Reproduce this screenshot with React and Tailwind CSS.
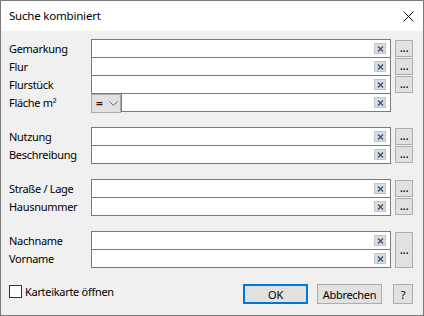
import React from 'react';

const groups = [
  { labels: ['Gemarkung', 'Flur', 'Flurstück', 'Fläche m²'], buttons: 3 },
  { labels: ['Nutzung', 'Beschreibung'], buttons: 2 },
  { labels: ['Straße / Lage', 'Hausnummer'], buttons: 2 },
  { labels: ['Nachname', 'Vorname'], buttons: 0, merged: true },
];

function ClearButton() {
  return (
    <span className="flex h-[11px] w-[12px] items-center justify-center border border-[#c4c4c4] bg-[#dcdcdc]">
      <svg width="7" height="6" viewBox="0 0 7 6">
        <path d="M1 0.5 L6 5.5 M6 0.5 L1 5.5" stroke="#2d4f86" strokeWidth="1.4" />
        <path d="M2.6 2.2 L4.4 3.8" stroke="#b86a2a" strokeWidth="0.8" />
      </svg>
    </span>
  );
}

function TextBox({ width }) {
  return (
    <div
      className={`flex h-full items-center justify-end border border-[#7a7a7a] bg-white pr-[4px] ${width}`}
    >
      <ClearButton />
    </div>
  );
}

function DotsButton({ tall }) {
  return (
    <button
      type="button"
      className={`flex w-[18px] items-center justify-center border border-[#adadad] bg-[#e1e1e1] pb-[1px] text-[12px] leading-none text-black ${
        tall ? 'h-[36px]' : 'h-[17px]'
      }`}
    >
      ...
    </button>
  );
}

function FieldRow({ label, first, children }) {
  return (
    <div className={`flex h-[19px] items-center ${first ? '' : 'mt-[-1px]'}`}>
      <span className="w-[82px] leading-none">{label}</span>
      {children}
    </div>
  );
}

function Group({ group, className }) {
  return (
    <div className={`flex ${className}`}>
      <div className="flex flex-col">
        {group.labels.map((label, index) => (
          <FieldRow key={label} label={label} first={index === 0}>
            {label === 'Fläche m²' ? (
              <div className="flex h-full">
                <div className="mt-[1px] flex h-[19px] w-[30px] items-center gap-[6px] border border-[#adadad] bg-[#e1e1e1] pl-[4px]">
                  <span className="text-[12px] font-bold leading-none text-[#3a0d0d]">=</span>
                  <svg width="9" height="5" viewBox="0 0 9 5">
                    <path d="M0.5 0.5 L4.5 4.5 L8.5 0.5" fill="none" stroke="#6b6b6b" strokeWidth="1" />
                  </svg>
                </div>
                <TextBox width="w-[270px]" />
              </div>
            ) : (
              <TextBox width="w-[300px]" />
            )}
          </FieldRow>
        ))}
      </div>
      <div className="ml-[4px] flex flex-col gap-[1px] pt-[1px]">
        {group.merged ? (
          <DotsButton tall />
        ) : (
          Array.from({ length: group.buttons }).map((_, i) => <DotsButton key={i} />)
        )}
      </div>
    </div>
  );
}

export default function App() {
  return (
    <div
      className="flex h-[316px] w-[424px] flex-col border border-[#7a7a7a] bg-[#f0f0f0] text-[11px] tracking-[-0.3px] text-black"
      style={{ fontFamily: '"Noto Sans", "Liberation Sans", sans-serif' }}
    >
      <div className="flex h-[30px] items-center justify-between bg-white pl-[8px] pr-[9px]">
        <span className="text-[11.5px] tracking-[-0.2px]">Suche kombiniert</span>
        <svg width="11" height="11" viewBox="0 0 11 11">
          <path d="M0.5 0.5 L10.5 10.5 M10.5 0.5 L0.5 10.5" stroke="#111" strokeWidth="1" />
        </svg>
      </div>

      <div className="flex flex-1 flex-col pl-[8px] pr-[10px] pt-[8px]">
        {groups.map((group, index) => (
          <Group key={index} group={group} className={index === 0 ? '' : 'mt-[15px]'} />
        ))}

        <div className="mt-[16px] flex items-start">
          <label className="mt-[1px] flex items-center gap-[3px]">
            <span className="h-[13px] w-[13px] border border-[#333] bg-white" />
            <span className="leading-none">Karteikarte öffnen</span>
          </label>
          <div className="ml-auto flex">
            <button
              type="button"
              className="h-[20px] w-[65px] border-2 border-[#0078d7] bg-[#e1e1e1] leading-none"
            >
              OK
            </button>
            <button
              type="button"
              className="ml-[9px] h-[20px] w-[65px] border border-[#adadad] bg-[#e1e1e1] leading-none"
            >
              Abbrechen
            </button>
            <button
              type="button"
              className="ml-[11px] h-[20px] w-[20px] border border-[#adadad] bg-[#e1e1e1] leading-none"
            >
              ?
            </button>
          </div>
        </div>
      </div>
    </div>
  );
}
